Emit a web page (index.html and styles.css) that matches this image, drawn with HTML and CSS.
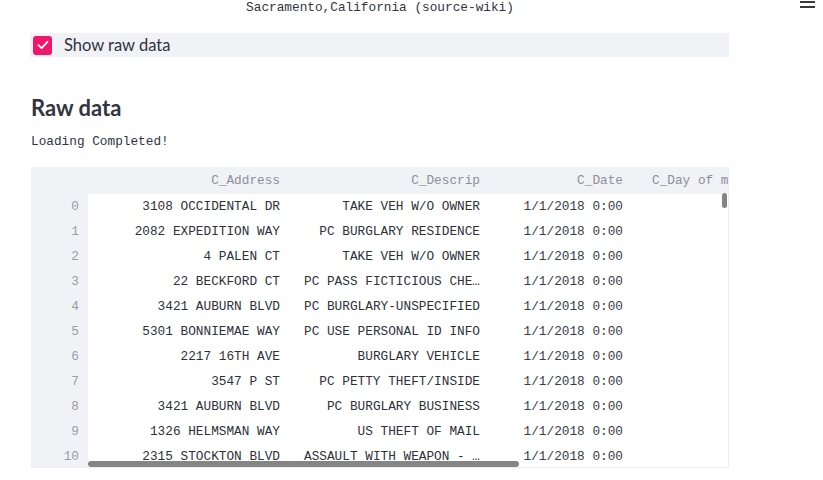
FILE: index.html
```html
<!DOCTYPE html>
<html>
<head>
<meta charset="utf-8">
<link rel="stylesheet" href="styles.css">
</head>
<body>
<div class="menu-btn"><span></span><span></span></div>
<main class="page">
  <div class="title">Sacramento,California (source-wiki)</div>
  <label class="check-row">
    <span class="box"><svg width="12" height="10" viewBox="0 0 12 10"><path d="M1.5 5.2 L4.6 8.2 L10.5 1.8" fill="none" stroke="#fff" stroke-width="1.8" stroke-linecap="round" stroke-linejoin="round"/></svg></span>
    <span class="check-label">Show raw data</span>
  </label>
  <h2 class="heading">Raw data</h2>
  <div class="mono-text">Loading Completed!</div>
  <div class="frame">
    <table class="grid">
      <colgroup>
        <col class="c-idx"><col class="c-addr"><col class="c-desc"><col class="c-date"><col class="c-day">
      </colgroup>
      <thead>
        <tr><th class="idx"></th><th>C_Address</th><th>C_Descrip</th><th>C_Date</th><th class="day">C_Day of m</th></tr>
      </thead>
      <tbody>
        <tr><td class="idx">0</td><td>3108 OCCIDENTAL DR</td><td>TAKE VEH W/O OWNER</td><td class="num">1/1/2018 0:00</td><td></td></tr>
        <tr><td class="idx">1</td><td>2082 EXPEDITION WAY</td><td>PC BURGLARY RESIDENCE</td><td class="num">1/1/2018 0:00</td><td></td></tr>
        <tr><td class="idx">2</td><td>4 PALEN CT</td><td>TAKE VEH W/O OWNER</td><td class="num">1/1/2018 0:00</td><td></td></tr>
        <tr><td class="idx">3</td><td>22 BECKFORD CT</td><td>PC PASS FICTICIOUS CHE…</td><td class="num">1/1/2018 0:00</td><td></td></tr>
        <tr><td class="idx">4</td><td>3421 AUBURN BLVD</td><td>PC BURGLARY-UNSPECIFIED</td><td class="num">1/1/2018 0:00</td><td></td></tr>
        <tr><td class="idx">5</td><td>5301 BONNIEMAE WAY</td><td>PC USE PERSONAL ID INFO</td><td class="num">1/1/2018 0:00</td><td></td></tr>
        <tr><td class="idx">6</td><td>2217 16TH AVE</td><td>BURGLARY VEHICLE</td><td class="num">1/1/2018 0:00</td><td></td></tr>
        <tr><td class="idx">7</td><td>3547 P ST</td><td>PC PETTY THEFT/INSIDE</td><td class="num">1/1/2018 0:00</td><td></td></tr>
        <tr><td class="idx">8</td><td>3421 AUBURN BLVD</td><td>PC BURGLARY BUSINESS</td><td class="num">1/1/2018 0:00</td><td></td></tr>
        <tr><td class="idx">9</td><td>1326 HELMSMAN WAY</td><td>US THEFT OF MAIL</td><td class="num">1/1/2018 0:00</td><td></td></tr>
        <tr><td class="idx">10</td><td>2315 STOCKTON BLVD</td><td>ASSAULT WITH WEAPON - …</td><td class="num">1/1/2018 0:00</td><td></td></tr>
      </tbody>
    </table>
    <div class="vscroll"></div>
    <div class="hscroll"></div>
  </div>
</main>
</body>
</html>
```

FILE: styles.css
```css
* { box-sizing: border-box; }
html, body { margin: 0; padding: 0; background: #fff; }
body { width: 823px; height: 480px; overflow: hidden; position: relative; }

.menu-btn {
  position: absolute;
  left: 800px;
  top: 1px;
  width: 15px;
  display: flex;
  flex-direction: column;
  gap: 3.5px;
}
.menu-btn span { display: block; height: 1.6px; background: #3a3a3a; }

.page {
  margin-left: 31px;
  width: 698px;
  display: flex;
  flex-direction: column;
}

.title {
  height: 15px;
  line-height: 15px;
  text-align: center;
  font-family: "Liberation Mono", monospace;
  font-size: 12.75px;
  color: #31333f;
}

.check-row {
  margin-top: 18px;
  margin-left: -1px;
  height: 24px;
  background: #f0f2f6;
  display: flex;
  align-items: center;
  padding-left: 3px;
  gap: 12px;
}
.box {
  width: 19px;
  height: 19px;
  border-radius: 3px;
  background: #f0166c;
  display: flex;
  align-items: center;
  justify-content: center;
}
.check-label {
  font-family: Lato, "Noto Sans", sans-serif;
  font-size: 16.5px;
  color: #31333f;
  line-height: 24px;
}

.heading {
  margin: 37px 0 0 0;
  height: 28px;
  line-height: 28px;
  font-family: Lato, "Noto Sans", sans-serif;
  font-size: 22px;
  font-weight: 700;
  color: #33353f;
}

.mono-text {
  margin-top: 12px;
  height: 16px;
  line-height: 16px;
  font-family: "Liberation Mono", monospace;
  font-size: 12.75px;
  color: #31333f;
}

.frame {
  margin-top: 17px;
  height: 301px;
  position: relative;
  overflow: hidden;
  border-right: 1px solid #eceef2;
  border-bottom: 1px solid #eceef2;
}

.grid {
  border-collapse: collapse;
  table-layout: fixed;
  width: 857px;
  font-family: "Liberation Mono", monospace;
  font-size: 12.75px;
}
.c-idx { width: 57px; }
.c-addr { width: 200px; }
.c-desc { width: 200px; }
.c-date { width: 143px; }
.c-day { width: 257px; }

.grid th, .grid td {
  padding: 0 8px 0 0;
  text-align: right;
  white-space: nowrap;
  overflow: hidden;
}
.grid thead th {
  height: 27px;
  padding-bottom: 1px;
  background: #f0f2f6;
  color: #8c8f9c;
  font-weight: 400;
}
.grid th.day { text-align: left; padding-left: 21px; }
.grid tbody td {
  height: 25px;
  color: #2e3039;
}
.grid td.idx {
  background: #f0f2f6;
  color: #9a9ca6;
  padding-right: 9px;
}
.grid td.num { color: #3a3c46; }

.vscroll {
  position: absolute;
  left: 691px;
  top: 26px;
  width: 5px;
  height: 15px;
  border-radius: 3px;
  background: #858585;
}
.hscroll {
  position: absolute;
  left: 57px;
  top: 294px;
  width: 431px;
  height: 6px;
  border-radius: 3px;
  background: #858585;
}
```
